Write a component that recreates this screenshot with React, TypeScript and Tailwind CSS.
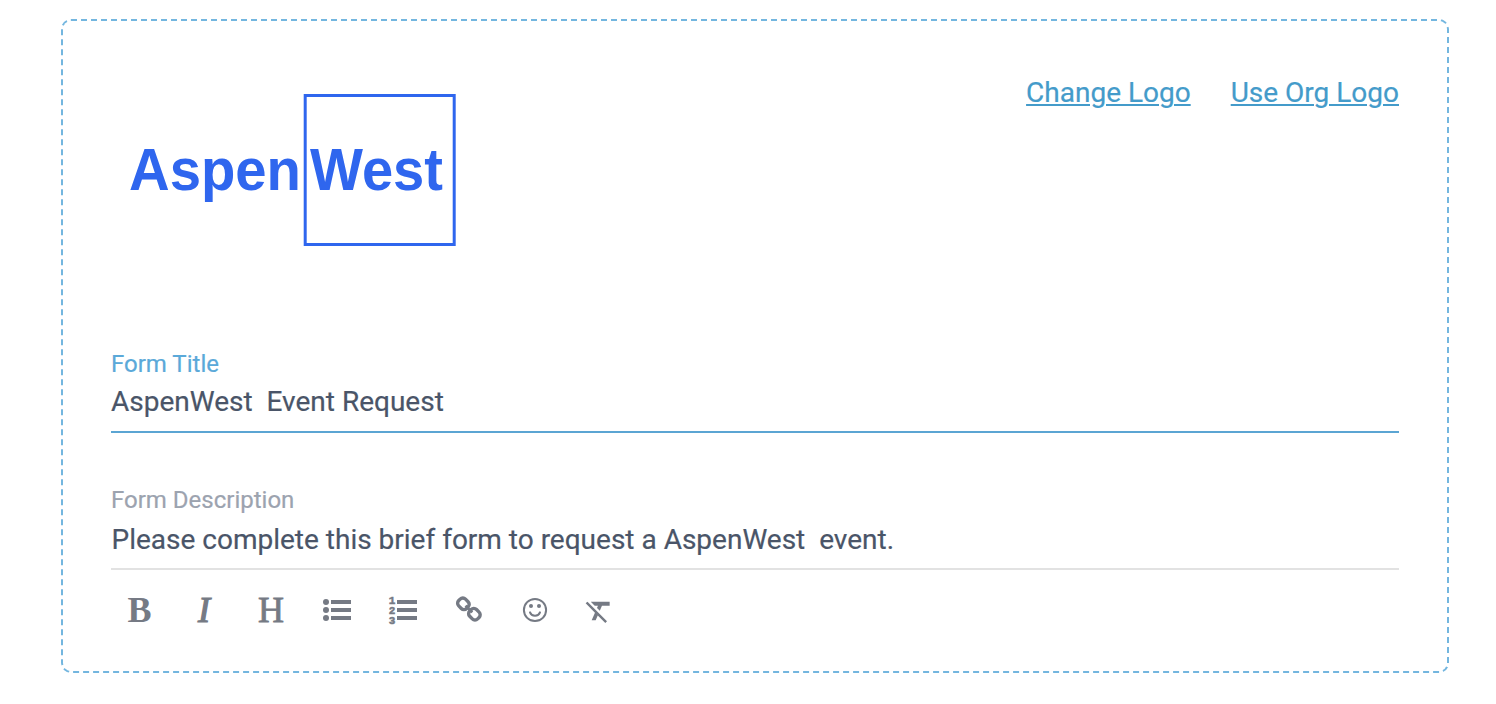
import type { ReactNode } from 'react';

const Logo = () => (
  <svg
    className="block h-[152px] w-[328px]"
    viewBox="0 0 328 152"
    fill="#2f66ee"
    fontFamily="'Liberation Sans', Arial, sans-serif"
    fontWeight="700"
    fontSize="58.5"
    aria-label="AspenWest"
  >
    <text x="1" y="95.5" textLength="172" lengthAdjust="spacingAndGlyphs">
      Aspen
    </text>
    <text x="182" y="95.5" textLength="133" lengthAdjust="spacingAndGlyphs">
      West
    </text>
    <rect x="177.2" y="1.5" width="149" height="149" fill="none" stroke="#2f66ee" strokeWidth="3" />
  </svg>
);

const BulletListIcon = () => (
  <svg className="h-7 w-7" viewBox="0 0 28 28" fill="currentColor">
    {[6, 14, 22].map((y) => (
      <g key={y}>
        <circle cx="3" cy={y} r="3" />
        <rect x="8" y={y - 2} width="20" height="4" />
      </g>
    ))}
  </svg>
);

const NumberListIcon = () => (
  <svg className="h-7 w-7 overflow-visible" viewBox="0 0 28 28" fill="currentColor">
    {[6, 14, 22].map((y, i) => (
      <g key={y}>
        <text
          x="-0.3"
          y={7.6 + i * 10}
          fontFamily="'Liberation Mono', monospace"
          fontSize="11"
          fontWeight="700"
          stroke="currentColor"
          strokeWidth="0.5"
        >
          {i + 1}
        </text>
        <rect x="8" y={y - 2} width="20" height="4" />
      </g>
    ))}
  </svg>
);

const LinkIcon = () => (
  <svg className="h-7 w-7" viewBox="0 0 28 28" fill="none" stroke="currentColor" strokeWidth="3.4">
    <rect x="-5.6" y="-4.8" width="11.2" height="9.6" rx="3.8" transform="translate(8.4 7.8) rotate(45)" />
    <rect x="-5.6" y="-4.8" width="11.2" height="9.6" rx="3.8" transform="translate(19.4 18.2) rotate(45)" />
    <path d="M10.5 9.7l6.8 6.7" strokeWidth="2.6" />
  </svg>
);

const SmileIcon = () => (
  <svg className="h-7 w-7" viewBox="0 0 28 28" fill="none" stroke="currentColor" strokeWidth="2">
    <circle cx="14" cy="14" r="11.1" />
    <circle cx="10" cy="10" r="2" fill="currentColor" stroke="none" />
    <circle cx="18" cy="10" r="2" fill="currentColor" stroke="none" />
    <path d="M9 16.4c1.6 4.3 8.4 4.3 10 0" strokeLinecap="round" />
  </svg>
);

const ClearFormatIcon = () => (
  <svg className="mt-px -ml-1 h-8 w-8" viewBox="0 0 24 24" fill="currentColor">
    <path d="M3.27 5L2 6.27l6.97 6.97L6.5 19h3l1.57-3.66L16.73 21 18 19.73 3.55 5.27 3.27 5zM6 5v.18L8.82 8h2.4l-.72 1.68 2.1 2.1L14.21 8H20V5H6z" />
  </svg>
);

interface ToolButtonProps {
  label: string;
  children: ReactNode;
}

function ToolButton({ label, children }: ToolButtonProps) {
  return (
    <button type="button" aria-label={label} className="flex h-8 w-[66px] items-center pl-[14px]">
      {children}
    </button>
  );
}

export default function App() {
  return (
    <div className="pt-[19px] pr-[47px] pl-[61px] font-['Roboto',sans-serif] text-[28px] text-[#4a5568] [-webkit-text-stroke:0.2px]">
      <section className="h-[654px] rounded-[10px] border-2 border-dashed border-[#73b6df] px-12">
        <header className="flex items-start justify-between">
          <div className="pt-[73px] pl-[17px] [-webkit-text-stroke:0]">
            <Logo />
          </div>
          <nav className="flex gap-10 pt-14 leading-8 text-[#449bca]">
            <a href="#" className="underline decoration-2 underline-offset-2">Change Logo</a>
            <a href="#" className="underline decoration-2 underline-offset-2">Use Org Logo</a>
          </nav>
        </header>

        <div className="mt-[102px] border-b-2 border-[#5ba5d3]">
          <div className="h-8 text-2xl leading-8 text-[#5ba9d9]">Form Title</div>
          <div className="h-[51px] pt-1 leading-9 whitespace-pre">AspenWest  Event Request</div>
        </div>

        <div className="mt-[51px] border-b-2 border-[#e2e2e2]">
          <div className="h-8 text-2xl leading-8 text-[#9ca3af]">Form Description</div>
          <div className="h-[52px] pt-[6px] pl-[0.5px] leading-9 whitespace-pre">
            Please complete this brief form to request a AspenWest  event.
          </div>
        </div>

        <div className="mt-6 flex items-center font-['Liberation_Serif',serif] text-4xl leading-8 text-[#757a84] [-webkit-text-stroke:0]">
          <ToolButton label="Bold"><span className="pl-[2.5px] font-bold">B</span></ToolButton>
          <ToolButton label="Italic"><span className="pl-[7px] italic [-webkit-text-stroke:1.2px]">I</span></ToolButton>
          <ToolButton label="Heading"><span className="pl-px [-webkit-text-stroke:0.8px]">H</span></ToolButton>
          <ToolButton label="Bulleted list"><BulletListIcon /></ToolButton>
          <ToolButton label="Numbered list"><NumberListIcon /></ToolButton>
          <ToolButton label="Link"><LinkIcon /></ToolButton>
          <ToolButton label="Emoji"><SmileIcon /></ToolButton>
          <ToolButton label="Clear formatting"><ClearFormatIcon /></ToolButton>
        </div>
      </section>
    </div>
  );
}
